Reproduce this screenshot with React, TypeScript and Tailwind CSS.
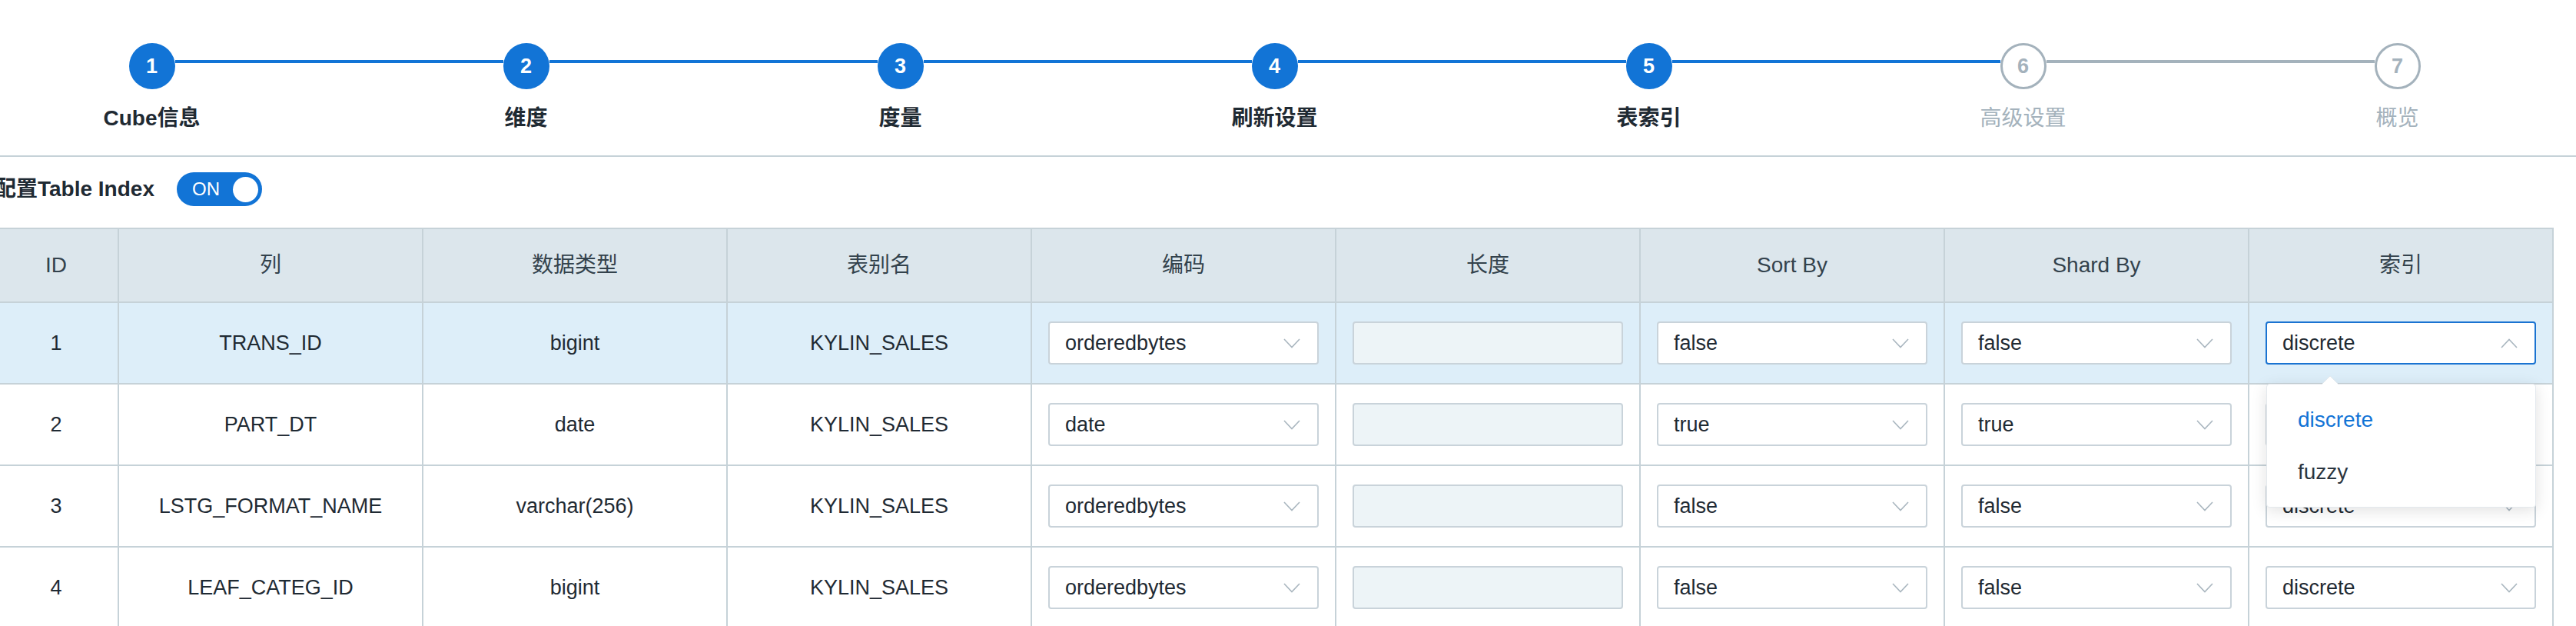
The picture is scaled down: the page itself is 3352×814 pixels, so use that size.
import React from "react";

const FONT = { fontFamily: '"Liberation Sans", "Noto Sans CJK SC", sans-serif' };

const steps = [
  { n: 1, label: "Cube信息" },
  { n: 2, label: "维度" },
  { n: 3, label: "度量" },
  { n: 4, label: "刷新设置" },
  { n: 5, label: "表索引" },
  { n: 6, label: "高级设置" },
  { n: 7, label: "概览" },
];

function Chevron({ up }: { up?: boolean }) {
  return (
    <svg width="22" height="13" viewBox="0 0 22 13" className="shrink-0">
      <polyline
        points={up ? "1,12 11,1.5 21,12" : "1,1 11,11.5 21,1"}
        fill="none"
        stroke="#a9b6bf"
        strokeWidth="1.6"
      />
    </svg>
  );
}

function Select({ value, open }: { value: string; open?: boolean }) {
  return (
    <div
      className={
        open
          ? "mx-auto w-[352px] h-[56px] rounded-[4px] border-2 border-[#1a73d1] bg-white flex items-center justify-between pl-[20px] pr-[22px]"
          : "mx-auto w-[352px] h-[56px] rounded-[4px] border-2 border-[#c9d3da] bg-white flex items-center justify-between pl-[20px] pr-[22px]"
      }
    >
      <span className="text-[27px] text-[#1f2a33]">{value}</span>
      <Chevron up={open} />
    </div>
  );
}

function Input() {
  return <div className="mx-auto w-[352px] h-[56px] rounded-[4px] border-2 border-[#c9d3da] bg-[#edf4f7]" />;
}

const rows = [
  { id: "1", col: "TRANS_ID", type: "bigint", enc: "orderedbytes", sort: "false", shard: "false", open: true },
  { id: "2", col: "PART_DT", type: "date", enc: "date", sort: "true", shard: "true" },
  { id: "3", col: "LSTG_FORMAT_NAME", type: "varchar(256)", enc: "orderedbytes", sort: "false", shard: "false" },
  { id: "4", col: "LEAF_CATEG_ID", type: "bigint", enc: "orderedbytes", sort: "false", shard: "false" },
];

const headers = ["ID", "列", "数据类型", "表别名", "编码", "长度", "Sort By", "Shard By", "索引"];

export default function App() {
  return (
    <div className="relative w-[3352px] h-[814px] overflow-hidden bg-white" style={FONT}>
      {/* Steps */}
      <div className="h-[204px] border-b-2 border-[#c6d2d8]">
        <div className="flex ml-[-46px] pt-[56px]">
          {steps.map((s) => {
            const active = s.n <= 5;
            return (
              <div key={s.n} className="w-[487px] shrink-0 flex flex-col items-center">
                <div className="w-full flex items-start h-[60px]">
                  <div
                    className={
                      s.n === 1
                        ? "flex-1 h-[4px] mt-[22px]"
                        : s.n <= 6
                        ? "flex-1 h-[4px] mt-[22px] bg-[#1274d6]"
                        : "flex-1 h-[4px] mt-[22px] bg-[#a4b2bc]"
                    }
                  />
                  <div
                    className={
                      active
                        ? "w-[60px] h-[60px] rounded-full bg-[#1274d6] flex items-center justify-center text-white text-[27px] font-bold"
                        : "w-[60px] h-[60px] rounded-full border-[3px] border-[#a4b2bc] bg-white flex items-center justify-center text-[#a4b2bc] text-[27px] font-bold"
                    }
                  >
                    {s.n}
                  </div>
                  <div
                    className={
                      s.n === 7
                        ? "flex-1 h-[4px] mt-[22px]"
                        : s.n <= 5
                        ? "flex-1 h-[4px] mt-[22px] bg-[#1274d6]"
                        : "flex-1 h-[4px] mt-[22px] bg-[#a4b2bc]"
                    }
                  />
                </div>
                <div
                  className={
                    active
                      ? "mt-[22px] leading-[32px] text-[28px] font-bold text-[#1f2a33]"
                      : "mt-[22px] leading-[32px] text-[28px] text-[#a4b2bc]"
                  }
                >
                  {s.label}
                </div>
              </div>
            );
          })}
        </div>
      </div>

      {/* Body */}
      <div className="ml-[-7px]">
        <div className="flex items-center pt-[20px] h-[92px] pb-[28px]">
          <span className="text-[28px] font-bold text-[#1f2a33]">配置Table Index</span>
          <div className="ml-[29px] w-[111px] h-[44px] rounded-full bg-[#1274d6] flex items-center justify-between pl-[20px] pr-[5px]">
            <span className="text-white text-[24px]">ON</span>
            <div className="w-[33px] h-[33px] rounded-full bg-white" />
          </div>
        </div>

        <div className="grid grid-cols-[162px_repeat(8,396px)] border-t-2 border-[#c6d2d8] w-max">
          {headers.map((h) => (
            <div
              key={h}
              className="h-[96px] bg-[#dce6ec] border-r-2 border-b-2 border-[#c6d2d8] flex items-center justify-center text-[28px] text-[#33424c]"
            >
              {h}
            </div>
          ))}
          {rows.map((r) => {
            const cell = r.open
              ? "h-[106px] bg-[#ddeef9] border-r-2 border-b-2 border-[#c6d2d8] flex items-center justify-center text-[27px] text-[#1f2a33]"
              : "h-[106px] bg-white border-r-2 border-b-2 border-[#c6d2d8] flex items-center justify-center text-[27px] text-[#1f2a33]";
            return (
              <React.Fragment key={r.id}>
                <div className={cell}>{r.id}</div>
                <div className={cell}>{r.col}</div>
                <div className={cell}>{r.type}</div>
                <div className={cell}>KYLIN_SALES</div>
                <div className={cell}>
                  <Select value={r.enc} />
                </div>
                <div className={cell}>
                  <Input />
                </div>
                <div className={cell}>
                  <Select value={r.sort} />
                </div>
                <div className={cell}>
                  <Select value={r.shard} />
                </div>
                <div className={cell}>
                  <Select value="discrete" open={r.open} />
                </div>
              </React.Fragment>
            );
          })}
        </div>
      </div>

      {/* Dropdown popover */}
      <div className="absolute left-[2949px] top-[499px] w-[351px] h-[161px] bg-white rounded-[4px] border border-[#e4e9ed] shadow-[0_4px_20px_rgba(0,0,0,0.12)] py-[12px]">
        <div className="h-[68px] flex items-center pl-[40px] text-[28px] text-[#1274d6]">discrete</div>
        <div className="h-[68px] flex items-center pl-[40px] text-[28px] text-[#2a3540]">fuzzy</div>
      </div>
      <svg className="absolute left-[3021px] top-[489px]" width="22" height="11" viewBox="0 0 22 11">
        <polygon points="0,11 11,0 22,11" fill="#ffffff" />
        <polyline points="0,11 11,0 22,11" fill="none" stroke="#e4e9ed" strokeWidth="1" />
      </svg>
    </div>
  );
}
